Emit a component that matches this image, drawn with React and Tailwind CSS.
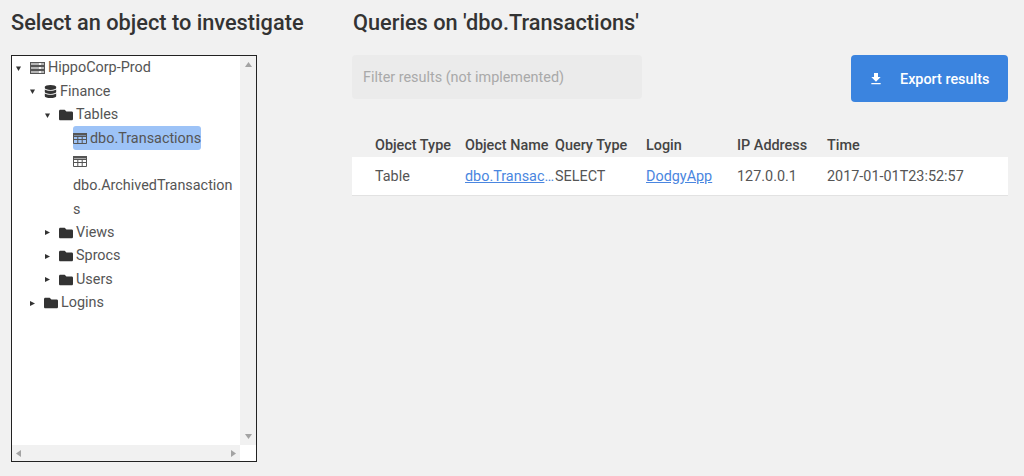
import React from 'react';
import { FaDatabase, FaFolder } from 'react-icons/fa';
import { MdFileDownload } from 'react-icons/md';

const COLUMNS = ['Object Type', 'Object Name', 'Query Type', 'Login', 'IP Address', 'Time'];

const Caret = ({ open }) => (
  <svg width="5" height="5" viewBox="0 0 5 5" className="shrink-0 fill-[#333]">
    {open ? <path d="M0 .5h5L2.500 5z" /> : <path d="M0 0l5 2.500L0 5z" />}
  </svg>
);

const ServerIcon = () => (
  <svg width="15" height="12" viewBox="0 0 15 12" className="shrink-0">
    <path d="M0 0h15v12H0z" fill="#555" />
    <path d="M1 1h13v2H1zM1 5h13v2H1zM1 9h13v2H1z" fill="#b5b5b5" />
    <path d="M9 1h2v2H9zM9 5h2v2H9zM9 9h2v2H9z" fill="#f2f2f2" />
  </svg>
);

const TableIcon = () => (
  <svg width="14" height="11" viewBox="0 0 14 11" className="inline align-[-1px] mr-[3px]">
    <path
      d="M.5.500h13v10H.5zM0 3.500h14M0 6.500h14M4.800 3v8M9.200 3v8"
      fill="none"
      stroke="#555"
    />
    <path d="M0 0h14v2.500H0z" fill="#555" />
  </svg>
);

const Row = ({ indent, open, icon, gap, label }) => (
  <div className="flex items-center h-[23.5px]" style={{ paddingLeft: indent }}>
    <span className="w-[14px] shrink-0 flex items-center">
      {open !== undefined && <Caret open={open} />}
    </span>
    {icon}
    <span style={{ marginLeft: gap }}>{label}</span>
  </div>
);

const TableLeaf = ({ label, selected }) => (
  <div className="pl-[61px] pr-[5px]">
    <span
      className={`inline break-words leading-[23.5px] py-[3.5px] rounded-[3px] ${
        selected ? 'bg-[#9dc3f7]' : ''
      }`}
    >
      <TableIcon />
      {label}
    </span>
  </div>
);

const ScrollArrow = ({ d, className }) => (
  <svg width="7" height="7" viewBox="0 0 7 7" className={`fill-[#a3a3a3] ${className}`}>
    <path d={d} />
  </svg>
);

const folder = <FaFolder size={14} className="shrink-0 text-[#333]" />;

const Tree = () => (
  <div className="w-[246px] h-[407px] border border-[#222] bg-white flex flex-col overflow-hidden">
    <div className="flex flex-1 min-h-0">
      <div className="w-[228px] shrink-0 pt-[0.3px] text-[14.4px] text-[#555]">
        <Row indent={4} open={true} icon={<ServerIcon />} gap={3} label="HippoCorp-Prod" />
        <Row
          indent={18}
          open={true}
          icon={<FaDatabase size={13} className="shrink-0 text-[#333]" />}
          gap={3}
          label="Finance"
        />
        <Row indent={33} open={true} icon={folder} gap={3} label="Tables" />
        <TableLeaf label="dbo.Transactions" selected />
        <TableLeaf label="dbo.ArchivedTransactions" />
        <Row indent={33} open={false} icon={folder} gap={3} label="Views" />
        <Row indent={33} open={false} icon={folder} gap={3} label="Sprocs" />
        <Row indent={33} open={false} icon={folder} gap={3} label="Users" />
        <Row indent={18} open={false} icon={folder} gap={3} label="Logins" />
      </div>
      <div className="flex-1 bg-[#f1f1f1] flex flex-col items-center justify-between py-[5px]">
        <ScrollArrow d="M3.500 1L7 6H0z" />
        <ScrollArrow d="M0 1h7L3.500 6z" />
      </div>
    </div>
    <div className="h-[16px] shrink-0 flex">
      <div className="w-[228px] bg-[#f1f1f1] flex items-center justify-between px-[3px]">
        <ScrollArrow d="M6 0v7L1 3.500z" />
        <ScrollArrow d="M1 0v7l5-3.500z" />
      </div>
      <div className="flex-1 bg-white" />
    </div>
  </div>
);

export default function App() {
  return (
    <div className="w-[1024px] h-[476px] bg-[#f1f1f1] overflow-hidden flex font-['Roboto',sans-serif] text-[14.4px] text-[#555]">
      <div className="w-[352px] shrink-0 pl-[11px] pt-[10px]">
        <h2 className="text-[21.76px] leading-[26px] font-medium text-[#333] h-[45px]">
          Select an object to investigate
        </h2>
        <Tree />
      </div>

      <div className="w-[656px] shrink-0 pt-[10px]">
        <h2 className="text-[21.76px] leading-[26px] font-medium text-[#333] h-[45px] pl-[1px]">
          Queries on 'dbo.Transactions'
        </h2>

        <div className="flex items-start justify-between h-[81px]">
          <input
            readOnly
            placeholder="Filter results (not implemented)"
            className="w-[290px] h-[44px] rounded-[4px] bg-[#ebebeb] px-[11px] text-[14.4px] placeholder:text-[#a9a9a9] outline-none"
          />
          <button className="w-[157px] h-[47px] rounded-[4px] bg-[#3b84df] text-white text-[14.4px] font-medium flex items-center pl-[17px] pt-[2px]">
            <MdFileDownload size={16} className="-mt-[2px]" />
            <span className="ml-[16px]">Export results</span>
          </button>
        </div>

        <div className="grid grid-cols-[113px_90px_91px_91px_90px_181px] h-[21px] pb-[3px] items-center leading-[17px] font-medium text-[#444]">
          {COLUMNS.map((c, i) => (
            <div key={c} className={`whitespace-nowrap ${i === 0 ? 'pl-[23px]' : ''}`}>
              {c}
            </div>
          ))}
        </div>
        <div className="grid grid-cols-[113px_90px_91px_91px_90px_181px] h-[39px] pt-[1px] items-center bg-white border-b border-[#e2e2e2]">
          <div className="pl-[23px]">Table</div>
          <a href="#" className="truncate text-[#4a86e0] underline">dbo.Transactions</a>
          <div>SELECT</div>
          <a href="#" className="text-[#4a86e0] underline">DodgyApp</a>
          <div>127.0.0.1</div>
          <div>2017-01-01T23:52:57</div>
        </div>
      </div>
    </div>
  );
}
